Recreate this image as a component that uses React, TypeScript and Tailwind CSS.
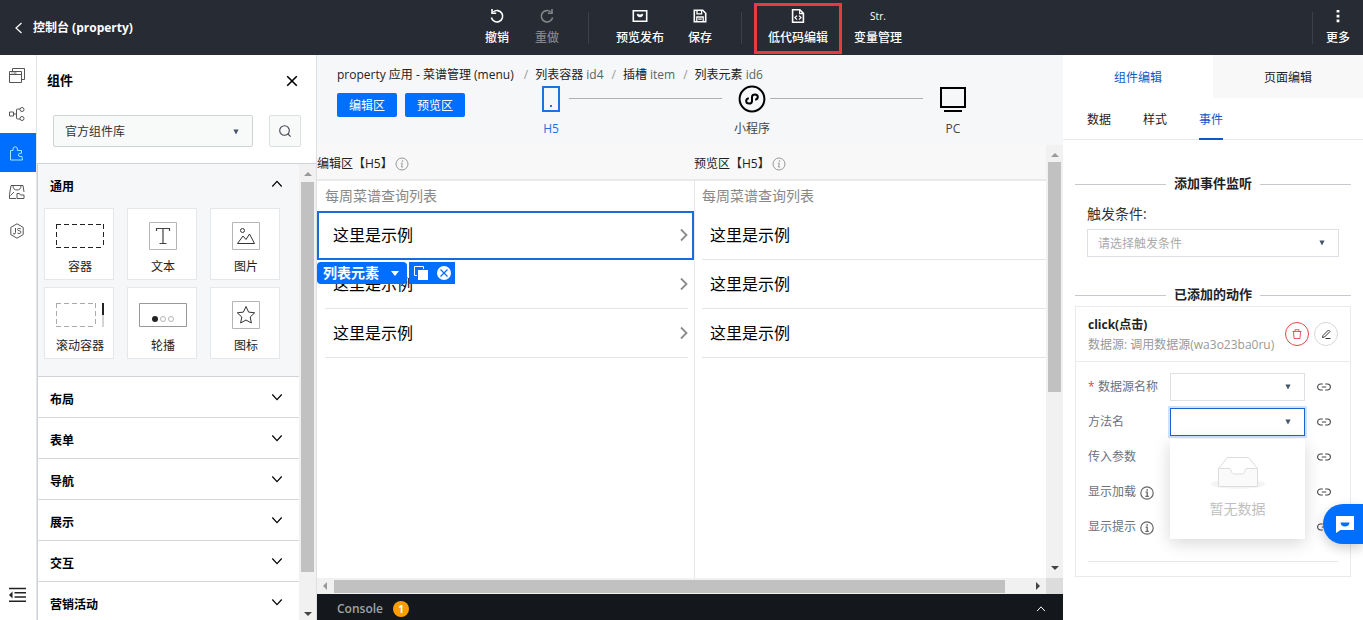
import { useState } from 'react'
import type { ReactNode } from 'react'

type IconProps = { className?: string }

/* ---------- icons ---------- */

function Chevron({ className = '' }: IconProps) {
  return (
    <svg className={className} width="12" height="8" viewBox="0 0 12 8" fill="none" stroke="currentColor" strokeWidth="1.2">
      <path d="M1.3 1.5 6 6.6l4.7-5.1" />
    </svg>
  )
}

function Caret({ className = '' }: IconProps) {
  return (
    <svg className={className} width="6" height="6" viewBox="0 0 6 6" fill="currentColor">
      <path d="M.4.6h5.2L3 5.6z" />
    </svg>
  )
}

function InfoIcon({ className = '' }: IconProps) {
  return (
    <svg className={className} width="14" height="14" viewBox="0 0 14 14" fill="none" stroke="currentColor">
      <circle cx="7" cy="7" r="6.2" strokeWidth="1.2" />
      <path d="M5.6 6.2h1.6v4M5.4 10.3h3.4" strokeWidth="1.3" />
      <path d="M6.4 3.2h1.5v1.5H6.4z" fill="currentColor" stroke="none" />
    </svg>
  )
}

function TipIcon({ className = '' }: IconProps) {
  return (
    <svg className={className} width="14" height="14" viewBox="0 0 14 14" fill="none" stroke="currentColor">
      <circle cx="7" cy="7" r="6" strokeWidth="1" />
      <path d="M5.8 6.2h1.5L6.5 10h1.6" strokeWidth="1" />
      <path d="M6.9 3.4h1.3v1.3H6.9z" fill="currentColor" stroke="none" />
    </svg>
  )
}

function LinkIcon() {
  return (
    <svg width="14" height="8" viewBox="0 0 14 8" fill="none" stroke="currentColor" strokeWidth="1.1">
      <path d="M5.8 1H3.6a3 3 0 0 0 0 6h2.2M8.2 1h2.2a3 3 0 0 1 0 6H8.2M4.8 4h4.4" />
    </svg>
  )
}

const undoIcon = (
  <svg width="16" height="16" viewBox="0 0 16 16" fill="none" stroke="currentColor" strokeWidth="1.6">
    <path d="M4.2 4A5.7 5.7 0 1 1 2.4 9.5" />
    <path d="M3 1v4.2h4.2" />
  </svg>
)

const redoIcon = (
  <svg width="16" height="16" viewBox="0 0 16 16" fill="none" stroke="currentColor" strokeWidth="1.6">
    <path d="M11.8 4A5.7 5.7 0 1 0 13.6 9.5" />
    <path d="M13 1v4.2H8.800" />
  </svg>
)

const previewIcon = (
  <svg width="16" height="16" viewBox="0 0 16 16" fill="none" stroke="currentColor" strokeWidth="1.6">
    <path d="M1.3 2.8h13.4v10.4H1.3z" />
    <path d="M5 6.300h1.600q1.400 1.500 2.800 0H11Q10.600 9 8 9T5 6.300z" fill="currentColor" strokeWidth=".6" />
  </svg>
)

const saveIcon = (
  <svg width="16" height="16" viewBox="0 0 16 16" fill="none" stroke="currentColor" strokeWidth="1.6">
    <path d="M2.3 2.3h8.4l3 3v8.4H2.3z" />
    <path d="M5 2.3v3.5h4.6V2.3M4.8 13.7V9h6.4v4.7M6.2 11.2h3.6" strokeWidth="1.3" />
  </svg>
)

const codeIcon = (
  <svg width="16" height="16" viewBox="0 0 16 16" fill="none" stroke="currentColor" strokeWidth="1.6">
    <path d="M2.6 1.8h7.2l3.6 3.6v8.8H2.6z" />
    <path d="M9.6 2v3.6h3.6" strokeWidth="1.2" />
    <path d="M7 7.6 5 9.6l2 2M9 7.6l2 2-2 2" strokeWidth="1.3" />
  </svg>
)

const strIcon = <span className="text-[10px] leading-4">Str.</span>

const moreIcon = (
  <svg width="16" height="16" viewBox="0 0 16 16" fill="currentColor">
    <path d="M6.6 2h2.8v2.6H6.6zM6.6 6.8h2.8v2.6H6.6zM6.6 11.6h2.8v2.6H6.6z" />
  </svg>
)

const railIcons: { name: string; icon: ReactNode }[] = [
  {
    name: '页面',
    icon: (
      <svg width="18" height="18" viewBox="0 0 18 18" fill="none" stroke="currentColor">
        <path d="M1.5 5.5h12v11h-12zM1.5 8.5h12M3.5 7h1M5.5 7h3" />
        <path d="M4.5 5.5v-3h12v11h-3" />
      </svg>
    ),
  },
  {
    name: '流程',
    icon: (
      <svg width="18" height="18" viewBox="0 0 18 18" fill="none" stroke="currentColor">
        <path d="M1.5 7h4v4h-4zM5.500 9h3M12 4h-2.500q-1 0-1 1v8q0 1 1 1H12" />
        <circle cx="14" cy="4.5" r="2" />
        <circle cx="14" cy="13.5" r="2" />
      </svg>
    ),
  },
  {
    name: '组件',
    icon: (
      <svg width="18" height="18" viewBox="0 0 18 18" fill="none" stroke="currentColor">
        <path d="M2.5 6.500H5V5a2.200 2.200 0 0 1 4.400 0v1.500h4.100v2.800h-1.500a1.600 1.600 0 0 0 0 3.200H14l.5 3.500h-12z" />
      </svg>
    ),
  },
  {
    name: '素材',
    icon: (
      <svg width="18" height="18" viewBox="0 0 18 18" fill="none" stroke="currentColor">
        <path d="M8 15.500H1.500v-4l1.500-9h12l1 6.500" />
        <path d="M5 2.500q0 4.500 4 4.500t4-4.500M2.500 12.500 6 9" />
        <path d="M9 15.500v-5h2.500l1 1.500h3.500v3.500z" />
      </svg>
    ),
  },
  {
    name: '脚本',
    icon: (
      <svg width="18" height="18" viewBox="0 0 18 18" fill="none" stroke="currentColor">
        <path d="M9 1.8 15.2 5.4v7.2L9 16.2l-6.2-3.6V5.4z" />
        <path d="M7.5 6v4.5q0 1.5-1.5 1.5l-1-.5M12.8 6.8q-3.3-1.3-3.3.7 0 1 1.8 1.3 1.9.3 1.7 1.7-.5 1.8-3.5.7" />
      </svg>
    ),
  },
]

const components: { label: string; icon: ReactNode }[] = [
  {
    label: '容器',
    icon: (
      <svg width="50" height="28" viewBox="0 0 50 28" fill="none" stroke="#222">
        <path d="M1 2.5h48M1 25.5h48M1.5 2v24M48.5 2v24" strokeDasharray="5 3" />
      </svg>
    ),
  },
  {
    label: '文本',
    icon: (
      <svg width="28" height="28" viewBox="0 0 28 28" fill="none" stroke="#444">
        <path d="M.5.5h27v27H.5z" stroke="#b5b5b5" />
        <path d="M7.5 9V6.5h13V9M14 6.5v15M10.5 21.5h7" strokeWidth="1.2" />
      </svg>
    ),
  },
  {
    label: '图片',
    icon: (
      <svg width="28" height="28" viewBox="0 0 28 28" fill="none" stroke="#333">
        <path d="M.5.5h27v27H.5z" stroke="#b5b5b5" />
        <circle cx="10.5" cy="8.5" r="2" />
        <path d="m5.500 21.500 5.500-7.500 3 3.500 3.500-5.500 5 9.500z" />
      </svg>
    ),
  },
  {
    label: '滚动容器',
    icon: (
      <svg width="50" height="28" viewBox="0 0 50 28" fill="none" stroke="#aaa">
        <path d="M1 2.5h40M1 25.5h40M1.5 2v24M40.5 2v24" strokeDasharray="5 3" />
        <path d="M48 14v12" />
        <path d="M48 2v12" stroke="#222" strokeWidth="2" />
      </svg>
    ),
  },
  {
    label: '轮播',
    icon: (
      <svg width="50" height="28" viewBox="0 0 50 28" fill="none" stroke="#b5b5b5">
        <path d="M1.5 2.5h47v23h-47z" stroke="#999" />
        <circle cx="17" cy="18" r="3" fill="#222" stroke="none" />
        <circle cx="25" cy="18" r="2.5" />
        <circle cx="33" cy="18" r="2.5" />
      </svg>
    ),
  },
  {
    label: '图标',
    icon: (
      <svg width="28" height="28" viewBox="0 0 28 28" fill="none" stroke="#333">
        <path d="M.5.5h27v27H.5z" stroke="#b5b5b5" />
        <path d="m14 5.500 2.600 5.600 6.100.7-4.500 4.200 1.200 6-5.400-3-5.400 3 1.200-6-4.500-4.200 6.100-.7z" />
      </svg>
    ),
  },
]

const categories = ['布局', '表单', '导航', '展示', '交互', '营销活动']
const crumbs = [
  { name: '列表容器', id: 'id4' },
  { name: '插槽', id: 'item' },
  { name: '列表元素', id: 'id6' },
]

/* ---------- header ---------- */

function ToolButton({ icon, label, className = 'w-[50px]' }: { icon: ReactNode; label: string; className?: string }) {
  return (
    <button className={`flex flex-col items-center justify-center gap-1 shrink-0 ${className}`}>
      <span className="h-4 flex items-center">{icon}</span>
      <span className="text-xs leading-5 font-medium whitespace-nowrap">{label}</span>
    </button>
  )
}

function Header() {
  return (
    <header className="h-[55px] shrink-0 flex items-stretch bg-[#272b33] text-white">
      <div className="w-[472px] flex items-center pl-3.5 gap-2.5">
        <button aria-label="返回">
          <svg width="9" height="12" viewBox="0 0 9 12" fill="none" stroke="currentColor" strokeWidth="1.2">
            <path d="M7.5 1 2 6l5.500 5" />
          </svg>
        </button>
        <h1 className="text-xs font-bold">控制台 (property)</h1>
      </div>
      <ToolButton icon={undoIcon} label="撤销" />
      <ToolButton icon={redoIcon} label="重做" className="w-[50px] text-[#82858a]" />
      <i className="w-px h-8 mx-4 my-auto bg-[#3c4048]" />
      <ToolButton icon={previewIcon} label="预览发布" className="w-[70px]" />
      <ToolButton icon={saveIcon} label="保存" />
      <i className="w-px h-8 ml-4 mr-3 my-auto bg-[#3c4048]" />
      <ToolButton icon={codeIcon} label="低代码编辑" className="w-[88px] mt-[3px] mb-px pb-0.5 border-3 border-[#e63c3f]" />
      <ToolButton icon={strIcon} label="变量管理" className="w-[72px]" />
      <i className="w-px h-8 ml-auto my-auto bg-[#3c4048]" />
      <ToolButton icon={moreIcon} label="更多" />
    </header>
  )
}

/* ---------- left side ---------- */

function Rail() {
  return (
    <nav className="w-[37px] shrink-0 flex flex-col border-r border-[#e2e5ea] text-[#555]">
      {railIcons.map(({ name, icon }, i) => (
        <button
          key={name}
          aria-label={name}
          className={`h-[39px] pl-2 flex items-center ${i === 2 ? 'bg-[#006eff] text-[#9fe8ff]' : ''}`}
        >
          {icon}
        </button>
      ))}
      <button aria-label="收起" className="mt-auto mb-4 pl-2">
        <svg width="18" height="18" viewBox="0 0 18 18" fill="none" stroke="#222" strokeWidth="1.6">
          <path d="M1 2.5h17M6.5 6.8H18M6.5 11H18M1 15.3h17" />
          <path d="M4.5 5.5v7L1 9z" fill="#222" stroke="none" />
        </svg>
      </button>
    </nav>
  )
}

function ScrollArrow({ className = '' }: IconProps) {
  return (
    <svg className={`shrink-0 ${className}`} width="8" height="4" viewBox="0 0 8 4" fill="currentColor">
      <path d="M0 4h8L4 0z" />
    </svg>
  )
}

function ComponentPanel() {
  const [library, setLibrary] = useState('官方组件库')

  return (
    <aside className="w-[280px] shrink-0 flex flex-col border-r border-[#dcdfe3]">
      <div className="flex items-center justify-between h-[52px] pl-2.5 pr-3.5">
        <h2 className="text-[13px] font-bold">组件</h2>
        <button aria-label="关闭" className="p-1">
          <svg width="12" height="12" viewBox="0 0 12 12" stroke="#000" strokeWidth="1.6">
            <path d="m1.2 1.2 9.6 9.6M10.8 1.2l-9.6 9.6" />
          </svg>
        </button>
      </div>
      <div className="flex gap-4 pl-4 pr-[15px] pt-2 pb-4">
        <div className="relative flex-1">
          <select
            aria-label="组件库"
            value={library}
            onChange={(e) => setLibrary(e.target.value)}
            className="w-full h-8 pl-[11px] pt-0.5 text-xs appearance-none bg-[#f8f9f9] border border-[#cfd3d8] text-[#333] rounded-xs"
          >
            <option>官方组件库</option>
          </select>
          <Caret className="absolute right-3.5 top-3.5 text-[#456] pointer-events-none" />
        </div>
        <button aria-label="搜索" className="w-8 h-8 flex items-center justify-center bg-[#f8f9f9] border border-[#dcdfe3] rounded-xs">
          <svg width="12" height="12" viewBox="0 0 12 12" fill="none" stroke="#445" strokeWidth="1.1">
            <circle cx="5.5" cy="5.5" r="4.8" />
            <path d="m9 9 2.6 2.6" />
          </svg>
        </button>
      </div>
      <div className="flex-1 min-h-0 flex border-t border-l border-[#cfd3d8]">
        <div className="flex-1 overflow-hidden">
          <section className="bg-[#f6f7f9] border-b border-[#cfd3d8] pb-[17px]">
            <button className="w-full h-11 pl-3 pr-4 flex items-center justify-between">
              <span className="text-xs font-bold pt-0.5">通用</span>
              <Chevron className="rotate-180 mb-1" />
            </button>
            <div className="grid grid-cols-[repeat(3,70px)] gap-x-[13px] gap-y-[7px] pl-1.5">
              {components.map(({ label, icon }) => (
                <button
                  key={label}
                  className="h-[72px] pt-2.5 pl-0.5 flex flex-col items-center justify-center gap-[7px] bg-white border border-[#e5e8eb] text-xs leading-5 text-[#222]"
                >
                  {icon}
                  {label}
                </button>
              ))}
            </div>
          </section>
          {categories.map((name) => (
            <button key={name} className="w-full h-[41px] pl-3 pr-4 flex items-center justify-between border-b border-[#d5d8dc]">
              <span className="text-xs font-bold pt-1.5">{name}</span>
              <Chevron />
            </button>
          ))}
        </div>
        <div className="w-[17px] flex flex-col items-center justify-between bg-[#f1f1f1] pt-2 pb-1">
          <ScrollArrow className="text-[#999]" />
          <i className="w-[13px] flex-1 mt-1.5 mb-10 bg-[#c1c1c1]" />
          <ScrollArrow className="rotate-180 text-[#444]" />
        </div>
      </div>
    </aside>
  )
}

/* ---------- canvas ---------- */

function DeviceSteps() {
  return (
    <div className="flex-1 flex text-xs leading-5 text-[#444] ml-[68px] mr-[92px]">
      <button className="w-9 flex flex-col items-center gap-1.5 text-[#1f6fe5]">
        <svg width="18" height="28" viewBox="0 0 18 28" fill="none" stroke="currentColor" strokeWidth="2">
          <path d="M1 2h16v24H1z" />
          <path d="M8 21h2" />
        </svg>
        H5
      </button>
      <i className="flex-1 h-px mt-[13px] mr-3 bg-[#adb0b5]" />
      <button className="w-9 flex flex-col items-center gap-1.5 whitespace-nowrap">
        <svg width="28" height="28" viewBox="0 0 28 28" fill="none" stroke="#000" strokeWidth="2">
          <circle cx="14" cy="14" r="12.4" />
          <path d="M10.8 13.3c-1.6.3-2.6 1.4-2.6 2.7 0 1.6 1.300 2.600 2.900 2.600s2.900-1.100 2.900-2.700v-3.800c0-1.600 1.300-2.700 2.900-2.700s2.900 1 2.900 2.600c0 1.300-1 2.400-2.600 2.700" />
        </svg>
        小程序
      </button>
      <i className="flex-1 h-px mt-[13px] mr-3 bg-[#adb0b5]" />
      <button className="w-9 flex flex-col items-center gap-1.5">
        <svg width="28" height="28" viewBox="0 0 28 28" fill="none" stroke="#000" strokeWidth="2">
          <path d="M2 3h24v19H2zM5 26h18" />
        </svg>
        PC
      </button>
    </div>
  )
}

function ItemList({ editing = false }: { editing?: boolean }) {
  return (
    <div className={`w-[377px] shrink-0 pr-1.5 relative ${editing ? 'pl-2' : 'pl-[7px] border-l border-[#e8e8e8]'}`}>
      <p className="h-[30px] leading-[30px] text-sm text-[#888]">每周菜谱查询列表</p>
      <ul className="text-base text-black">
        {[0, 1, 2].map((i) => (
          <li key={i} className="h-[49px] pl-2 flex items-center justify-between border-b border-[#e5e5e5]">
            这里是示例
            <svg width="8" height="14" viewBox="0 0 8 14" fill="none" stroke="#8c8c8c" strokeWidth="1.8">
              <path d="m1 1.500 5.500 5.500L1 12.500" />
            </svg>
          </li>
        ))}
      </ul>
      {editing && (
        <div className="absolute inset-x-0 top-[30px]">
          <div className="h-[49px] border-2 border-[#1b6cdb]" />
          <div className="flex gap-0.5 mt-0.5 h-[22px] text-white">
            <button className="w-[90px] flex items-center justify-between pl-1.5 pr-2 rounded-sm bg-[#006eff] text-sm font-bold">
              列表元素
              <svg width="8" height="5" viewBox="0 0 8 5" fill="currentColor">
                <path d="M0 0h8L4 5z" />
              </svg>
            </button>
            <div className="flex items-center gap-2 px-1 bg-[#006eff]">
              <button aria-label="复制">
                <svg width="16" height="16" viewBox="0 0 16 16" fill="none" stroke="currentColor">
                  <path d="M4 10.5H1.5v-9h9V4" />
                  <path d="M5 5h10v10H5z" fill="currentColor" stroke="none" />
                </svg>
              </button>
              <button aria-label="删除">
                <svg width="14" height="14" viewBox="0 0 14 14">
                  <circle cx="7" cy="7" r="7" fill="#fff" />
                  <path d="m3.5 3.5 7 7M10.5 3.5l-7 7" stroke="#006eff" strokeWidth="1.2" />
                </svg>
              </button>
            </div>
          </div>
        </div>
      )}
    </div>
  )
}

function Workspace() {
  return (
    <main className="flex-1 min-w-0 flex flex-col bg-[#f6f7f9]">
      <div className="h-[90px] shrink-0 pl-5">
        <div className="pt-2.5 flex items-center gap-2 text-xs leading-5 text-[#222] whitespace-nowrap">
          <span className="mr-0.5">property 应用 - 菜谱管理 (menu)</span>
          {crumbs.map(({ name, id }) => (
            <span key={id} className="flex gap-[7px]">
              <span className="text-[#999]">/</span>
              <a href="#" className="text-[#222]">
                {name} <span className="text-[#566]">{id}</span>
              </a>
            </span>
          ))}
        </div>
        <div className="flex">
          <div className="flex gap-2 pt-2 text-xs text-white">
            <button className="w-[60px] h-6 pt-0.5 bg-[#006eff] rounded-xs">编辑区</button>
            <button className="w-[60px] h-6 pt-0.5 bg-[#006eff] rounded-xs">预览区</button>
          </div>
          <DeviceSteps />
        </div>
      </div>

      <div className="flex-1 min-h-0 flex">
        <div className="flex-1 min-w-0 flex flex-col">
          <div className="h-9 shrink-0 flex items-center pt-1 bg-[#f8f8f8] border-b-2 border-[#e9e9e9] text-xs text-[#222]">
            <span className="w-[377px] flex items-center gap-0.5">
              编辑区【H5】
              <TipIcon className="text-[#999]" />
            </span>
            <span className="flex items-center gap-0.5">
              预览区【H5】
              <TipIcon className="text-[#999]" />
            </span>
          </div>
          <div className="flex-1 flex overflow-hidden bg-white">
            <ItemList editing />
            <ItemList />
          </div>
        </div>
        <div className="w-[17px] flex flex-col items-center bg-[#f1f1f1] pt-2 pb-2 text-[#444]">
          <ScrollArrow className="text-[#999]" />
          <i className="w-[13px] h-[230px] mt-[5px] bg-[#c1c1c1]" />
          <ScrollArrow className="mt-auto rotate-180" />
        </div>
      </div>
      <div className="h-4 shrink-0 flex bg-[#f1f1f1]">
        <div className="flex-1 flex items-center gap-[5px] px-1">
          <ScrollArrow className="-rotate-90 text-[#999]" />
          <i className="h-[13px] flex-1 mr-6 bg-[#c1c1c1]" />
          <ScrollArrow className="rotate-90 text-[#444]" />
        </div>
        <i className="w-[17px] bg-[#dcdcdc]" />
      </div>

      <button className="h-[26px] shrink-0 flex items-center pl-5 pr-[17px] pt-1 bg-[#14181c] text-xs">
        <span className="font-semibold text-[#a0a3a6]">Console</span>
        <span className="ml-2.5 size-4 rounded-full bg-[#ff9d00] text-white text-[10px] leading-4 font-bold">1</span>
        <Chevron className="ml-auto rotate-180 w-2.5 text-white" />
      </button>
    </main>
  )
}

/* ---------- right side ---------- */

function SectionTitle({ children }: { children: ReactNode }) {
  return (
    <h3 className="flex items-center gap-2 h-5 text-[13px] font-bold text-[#222] before:h-px before:flex-1 before:bg-[#c5c8cc] after:h-px after:flex-1 after:bg-[#c5c8cc]">
      {children}
    </h3>
  )
}

function FieldSelect({ id, placeholder = '', focused = false }: { id: string; placeholder?: string; focused?: boolean }) {
  const border = focused ? 'border-[#1b62cc] ring-2 ring-[#cfe2ff]' : 'border-[#dde1e6]'
  return (
    <div className="relative flex-1">
      <select id={id} className={`block w-full h-7 pl-2.5 pt-0.5 text-xs text-[#aaa] appearance-none bg-white border ${border}`}>
        <option>{placeholder}</option>
      </select>
      <Caret className="absolute right-3.5 top-[11px] text-[#456] pointer-events-none" />
    </div>
  )
}

function EmptyMenu() {
  return (
    <div className="absolute left-0 right-0 top-[31px] z-10 h-[100px] flex flex-col items-center pt-3 bg-white shadow-[0_4px_16px_rgba(0,0,0,0.16)] text-sm text-[#bfbfbf]">
      <svg width="56" height="40" viewBox="0 0 56 40" fill="none" stroke="#dcdcdc">
        <ellipse cx="28" cy="33" rx="27" ry="5" fill="#f4f4f4" stroke="none" />
        <path d="M8.5 17.5 17.5 6.5h21l9 11" fill="#fff" />
        <path d="M8.5 17.5v18h39v-18H37c-1.500 0-2 1-2.500 3s-1.500 2.500-3 2.500h-7c-1.500 0-2.500-.5-3-2.500s-1-3-2.500-3z" fill="#fafafa" />
      </svg>
      <p className="mt-2">暂无数据</p>
    </div>
  )
}

const labelCls = 'w-[82px] flex items-center text-xs text-[#6b7280] whitespace-nowrap'

function ActionCard() {
  return (
    <div className="border border-[#e8eaec] bg-white">
      <div className="flex items-center h-[55px] pl-3 pr-3 border-b border-[#e8eaec] text-xs leading-5">
        <div className="flex-1 pt-0.5 whitespace-nowrap">
          <p className="font-bold text-[#222]">click(点击)</p>
          <p className="text-[#999]">数据源: 调用数据源(wa3o23ba0ru)</p>
        </div>
        <div className="flex gap-[5px]">
          <button aria-label="删除动作" className="size-6 flex items-center justify-center rounded-full border border-[#e54545] text-[#e54545]">
            <svg width="10" height="10" viewBox="0 0 10 10" fill="none" stroke="currentColor" strokeWidth=".9">
              <path d="M.5 2.5h9M3 2.5V.7h4v1.8M1.5 2.5l.5 7h6l.5-7" />
            </svg>
          </button>
          <button aria-label="编辑动作" className="size-6 flex items-center justify-center rounded-full border border-[#d5d8dc] text-[#333]">
            <svg width="10" height="10" viewBox="0 0 10 10" fill="none" stroke="currentColor" strokeWidth="1">
              <path d="M1.5 8.5 2 6.5 7.5 1l1.500 1.500L3.500 8zM4.500 9.500h5" />
            </svg>
          </button>
        </div>
      </div>

      <div className="pt-[11px] px-3">
        <div className="flex flex-col gap-[7px] pr-[7px] pb-5 border-b border-[#e5e7ea]">
          <div className="h-7 flex items-center">
            <label htmlFor="source" className={labelCls}>
              <span className="w-2.5 text-[#e54545]">*</span>数据源名称
            </label>
            <FieldSelect id="source" />
            <button aria-label="绑定数据源名称" className="ml-3 text-[#444]"><LinkIcon /></button>
          </div>
          <div className="h-7 flex items-center">
            <label htmlFor="method" className={labelCls}>方法名</label>
            <div className="relative flex-1 flex">
              <FieldSelect id="method" focused />
              <EmptyMenu />
            </div>
            <button aria-label="绑定方法名" className="ml-3 text-[#444]"><LinkIcon /></button>
          </div>
          {['传入参数', '显示加载', '显示提示'].map((label, i) => (
            <div key={label} className="h-7 flex items-center justify-between">
              <span className={labelCls}>
                {label}
                {i > 0 && <InfoIcon className="ml-1 mt-0.5 text-[#666]" />}
              </span>
              <button aria-label={`绑定${label}`} className="text-[#444]"><LinkIcon /></button>
            </div>
          ))}
        </div>
      </div>
      <div className="h-3.5" />
    </div>
  )
}

function PropertyPanel() {
  const [tab, setTab] = useState('事件')

  return (
    <aside className="w-[300px] shrink-0 bg-white text-xs">
      <div className="h-[43px] grid grid-cols-2">
        <button className="pt-0.5 text-[#1456c4]">组件编辑</button>
        <button className="pt-0.5 bg-[#f8f8f8] text-[#222]">页面编辑</button>
      </div>
      <div className="h-[42px] pl-6 flex gap-8 border-b border-[#e5e7ea]">
        {['数据', '样式', '事件'].map((name) => (
          <button
            key={name}
            onClick={() => setTab(name)}
            className={`-mb-px pt-1 border-b-2 ${tab === name ? 'border-[#1456c4] text-[#1456c4]' : 'border-transparent text-[#222]'}`}
          >
            {name}
          </button>
        ))}
      </div>
      <div className="px-3 pt-[34px]">
        <SectionTitle>添加事件监听</SectionTitle>
        <div className="px-3 pt-2.5 pb-7">
          <label htmlFor="trigger" className="block text-sm leading-5 mb-[5px] text-[#333]">触发条件:</label>
          <FieldSelect id="trigger" placeholder="请选择触发条件" />
        </div>
        <SectionTitle>已添加的动作</SectionTitle>
        <div className="pt-px">
          <ActionCard />
        </div>
      </div>
    </aside>
  )
}

export default function App() {
  return (
    <div
      lang="zh-CN"
      className="relative h-screen flex flex-col overflow-hidden bg-white text-black font-['Open_Sans','Noto_Sans_CJK_SC',sans-serif]"
    >
      <Header />
      <div className="flex-1 min-h-0 flex">
        <Rail />
        <ComponentPanel />
        <Workspace />
        <PropertyPanel />
      </div>

      {/* support chat */}
      <button
        aria-label="在线客服"
        className="absolute right-0 bottom-[76px] z-20 w-10 h-10 pl-1 flex items-center justify-center rounded-l-full bg-[#006eff] shadow-[0_4px_12px_rgba(0,0,0,0.2)]"
      >
        <svg width="18" height="17" viewBox="0 0 18 17" fill="#fff">
          <path d="M0 0h18v14H4.5L0 17z" />
          <path d="M4.5 6.5h9q-.5 4-4.5 4t-4.5-4z" fill="#006eff" />
        </svg>
      </button>
    </div>
  )
}
